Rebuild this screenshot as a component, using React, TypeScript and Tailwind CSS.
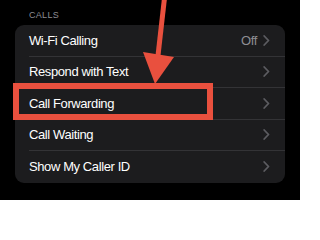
import React from 'react';

const rows = [
  { label: 'Wi-Fi Calling', value: 'Off' },
  { label: 'Respond with Text' },
  { label: 'Call Forwarding' },
  { label: 'Call Waiting' },
  { label: 'Show My Caller ID' },
];

const Chevron = () => (
  <svg width="7" height="11" viewBox="0 0 7 11" className="ml-[6px]">
    <polyline points="1.2,1 5.5,5.5 1.2,10" fill="none" stroke="#5c5c61" strokeWidth="1.8" strokeLinecap="round" strokeLinejoin="round" />
  </svg>
);

const App = () => {
  return (
    <div
      className="relative w-[300px] h-[200px] overflow-hidden bg-black text-white"
      style={{ fontFamily: '"Liberation Sans", Arial, sans-serif' }}
    >
      <div className="pl-[29px] pt-[10px] text-[9px] leading-[10px] tracking-[0.3px] text-[#8d8d92]">CALLS</div>

      <div className="mx-[15px] mt-[5px] w-[270px] rounded-[9px] bg-[#1c1c1e]">
        {rows.map((row, i) => (
          <div key={row.label} className="h-[31.5px] pl-[14px]">
            <div
              className={`flex h-full items-center pr-[15px] ${i < rows.length - 1 ? 'border-b border-[#333336]' : ''}`}
            >
              <span className="flex-1 text-[13px] tracking-[-0.4px]">{row.label}</span>
              {row.value && <span className="text-[13px] tracking-[-0.4px] text-[#8e8e93]">{row.value}</span>}
              <Chevron />
            </div>
          </div>
        ))}
      </div>

      {/* annotation: highlight box */}
      <div className="absolute left-[13px] top-[83px] h-[37px] w-[200px] border-[6px] border-[#e9503e]" />

      {/* annotation: arrow */}
      <svg className="absolute left-0 top-0" width="300" height="200" viewBox="0 0 300 200">
        <line x1="164.5" y1="-2" x2="157.5" y2="60" stroke="#e9503e" strokeWidth="5" />
        <polygon points="143,52 174,57 155,84" fill="#e9503e" />
      </svg>
    </div>
  );
};

export default App;
